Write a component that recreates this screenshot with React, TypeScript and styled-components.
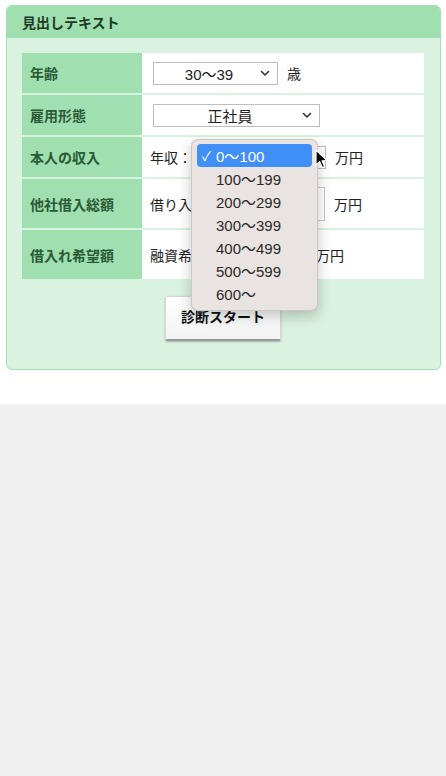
import styled, { createGlobalStyle } from 'styled-components'

const GlobalStyle = createGlobalStyle`
  html, body {
    margin: 0;
    padding: 0;
    background: #f0f0f0;
  }
  body {
    font-family: 'Noto Sans CJK JP', 'Liberation Sans', sans-serif;
    color: #222;
  }
`

const ageOptions = ['0〜100', '100〜199', '200〜299', '300〜399', '400〜499', '500〜599', '600〜']

const Chevron = () => (
  <svg width="10" height="7" viewBox="0 0 10 7">
    <path d="M1.5 1.5 L5 5 L8.5 1.5" fill="none" stroke="#333" strokeWidth="1.6" strokeLinecap="round" strokeLinejoin="round" />
  </svg>
)

const Cursor = () => (
  <svg width="13" height="20" viewBox="0 0 13 20">
    <path d="M1 1 L1 16 L4.6 12.6 L7.2 18.6 L9.6 17.6 L7 11.8 L12 11.6 Z" fill="#000" stroke="#fff" strokeWidth="1.2" strokeLinejoin="round" />
  </svg>
)

export default function App() {
  return (
    <>
      <GlobalStyle />
      <SPage>
        <SCard>
          <SCardHeader>見出しテキスト</SCardHeader>
          <SCardBody>
            <STable>
              <SLabel>年齢</SLabel>
              <SValue>
                <SSelect width={125}>
                  <SSelectText>30〜39</SSelectText>
                  <Chevron />
                </SSelect>
                <SUnit>歳</SUnit>
              </SValue>

              <SLabel>雇用形態</SLabel>
              <SValue>
                <SSelect width={167}>
                  <SSelectText>正社員</SSelectText>
                  <Chevron />
                </SSelect>
              </SValue>

              <SLabel>本人の収入</SLabel>
              <SValue>
                <SText>年収：</SText>
                {/* the open list below covers this select's value */}
                <SSelect width={131}>
                  <SSelectText />
                  <Chevron />
                </SSelect>
                <SUnit>万円</SUnit>
              </SValue>

              <SLabel $tall>他社借入総額</SLabel>
              <SValue $tall>
                <SText>借り入れ：</SText>
                <SInput width={105} />
                <SUnit>万円</SUnit>
              </SValue>

              <SLabel $tall>借入れ希望額</SLabel>
              <SValue $tall>
                <SText>融資希望額：</SText>
                <SInput width={73} />
                <SUnit>万円</SUnit>
              </SValue>
            </STable>
            <SButtonRow>
              <SStartButton>診断スタート</SStartButton>
            </SButtonRow>
          </SCardBody>
        </SCard>

        <SMenu>
          {ageOptions.map((opt, i) => (
            <SMenuItem key={opt} $selected={i === 0}>
              {i === 0 && <SCheck>✓</SCheck>}
              {opt}
            </SMenuItem>
          ))}
        </SMenu>
        <SCursor>
          <Cursor />
        </SCursor>
      </SPage>
    </>
  )
}

const SPage = styled.div`
  position: relative;
  background: #fff;
  height: 404px;
  padding: 5px 5px 0 6px;
  box-sizing: border-box;
`

const SCard = styled.section`
  width: 435px;
  box-sizing: border-box;
  border: 1px solid #a3e0b4;
  border-radius: 6px;
  background: #daf2e0;
  overflow: hidden;
`

const SCardHeader = styled.h2`
  margin: 0;
  height: 32px;
  display: flex;
  align-items: center;
  padding-left: 15px;
  background: #9fdfb0;
  color: #1d3a24;
  font-size: 14px;
  font-weight: bold;
`

const SCardBody = styled.div`
  padding: 15px 16px 28px 15px;
`

const STable = styled.div`
  display: grid;
  grid-template-columns: 120px 1fr;
  row-gap: 2px;
`

const SLabel = styled.div<{ $tall?: boolean }>`
  height: ${(p) => (p.$tall ? 49 : 40)}px;
  display: flex;
  align-items: center;
  padding-left: 8px;
  background: #9fdfb0;
  color: #2b5a36;
  font-size: 14px;
  font-weight: bold;
`

const SValue = styled.div<{ $tall?: boolean }>`
  height: ${(p) => (p.$tall ? 49 : 40)}px;
  display: flex;
  align-items: center;
  padding-left: 8px;
  background: #fff;
  font-size: 14px;
`

const SText = styled.span`
  white-space: nowrap;
`

const SUnit = styled.span`
  margin-left: 9px;
  white-space: nowrap;
`

const SSelect = styled.div<{ width: number }>`
  width: ${(p) => p.width}px;
  height: 23px;
  box-sizing: border-box;
  margin-left: 3px;
  display: flex;
  align-items: center;
  padding: 0 7px 0 4px;
  border: 1px solid #bdbdbd;
  background: #fff;
`

const SSelectText = styled.span`
  flex: 1;
  text-align: center;
  font-family: 'Liberation Sans', 'Noto Sans CJK JP', sans-serif;
  font-size: 15px;
  color: #222;
`

const SInput = styled.div<{ width: number }>`
  width: ${(p) => p.width}px;
  height: 34px;
  box-sizing: border-box;
  border: 1px solid #c8c8c8;
  background: #fff;
`

const SButtonRow = styled.div`
  display: flex;
  justify-content: center;
  margin-top: 17px;
`

const SStartButton = styled.button`
  width: 116px;
  height: 45px;
  border: 1px solid #d6d6d6;
  border-bottom: 2px solid #9a9a9a;
  border-radius: 2px;
  background: linear-gradient(#ffffff, #f3f3f3);
  box-shadow: 0 1px 2px rgba(0, 0, 0, 0.25);
  font-family: 'Noto Sans CJK JP', sans-serif;
  font-size: 14px;
  font-weight: bold;
  color: #111;
  padding: 0 0 5px;
`

const SMenu = styled.ul`
  position: absolute;
  left: 191px;
  top: 139px;
  width: 127px;
  box-sizing: border-box;
  margin: 0;
  padding: 4px 5px 5px;
  list-style: none;
  background: #e9e3e1;
  border: 1px solid rgba(0, 0, 0, 0.12);
  border-radius: 7px;
  box-shadow: 0 5px 14px rgba(0, 0, 0, 0.22);
`

const SMenuItem = styled.li<{ $selected?: boolean }>`
  position: relative;
  height: 23px;
  display: flex;
  align-items: center;
  padding-left: 19px;
  border-radius: 4px;
  background: ${(p) => (p.$selected ? '#3f8ff7' : 'transparent')};
  color: ${(p) => (p.$selected ? '#fff' : '#2a2a2a')};
  font-family: 'Liberation Sans', 'Noto Sans CJK JP', sans-serif;
  font-size: 15px;
`

const SCheck = styled.span`
  position: absolute;
  left: 5px;
  font-size: 13px;
`

const SCursor = styled.div`
  position: absolute;
  left: 315px;
  top: 149px;
  line-height: 0;
`
